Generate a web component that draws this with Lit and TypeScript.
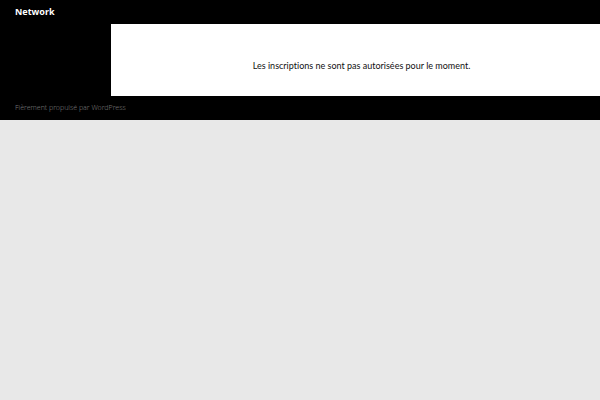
import { LitElement, html, css } from "lit";
import { customElement } from "lit/decorators.js";

@customElement("app-root")
export class AppRoot extends LitElement {
  static styles = css`
    :host {
      display: block;
      min-height: 100vh;
      background: #e8e8e8;
      font-family: "Noto Sans", sans-serif;
      font-size: 9px;
      line-height: 12px;
    }
    .site {
      background: #000;
    }
    .title {
      margin: 0;
      padding: 6px 15px;
      font-size: 9px;
      font-weight: 700;
    }
    .title a {
      color: #fff;
      text-decoration: none;
    }
    .content {
      margin-left: 111px;
      padding: 36px 12px 24px 24px;
      background: #fff;
      color: #111;
      font-family: Lato, sans-serif;
      font-variant-ligatures: none;
      text-align: center;
    }
    .content p {
      margin: 0;
    }
    .footer {
      padding: 6px 15px;
      font-size: 7px;
      font-weight: 300;
    }
    .footer a {
      color: #777;
      text-decoration: none;
    }
  `;

  render() {
    return html`
      <div class="site">
        <header>
          <h1 class="title"><a href="#">Network</a></h1>
        </header>
        <main class="content">
          <p>Les inscriptions ne sont pas autorisées pour le moment.</p>
        </main>
        <footer class="footer">
          <a href="#">Fièrement propulsé par WordPress</a>
        </footer>
      </div>
    `;
  }
}
